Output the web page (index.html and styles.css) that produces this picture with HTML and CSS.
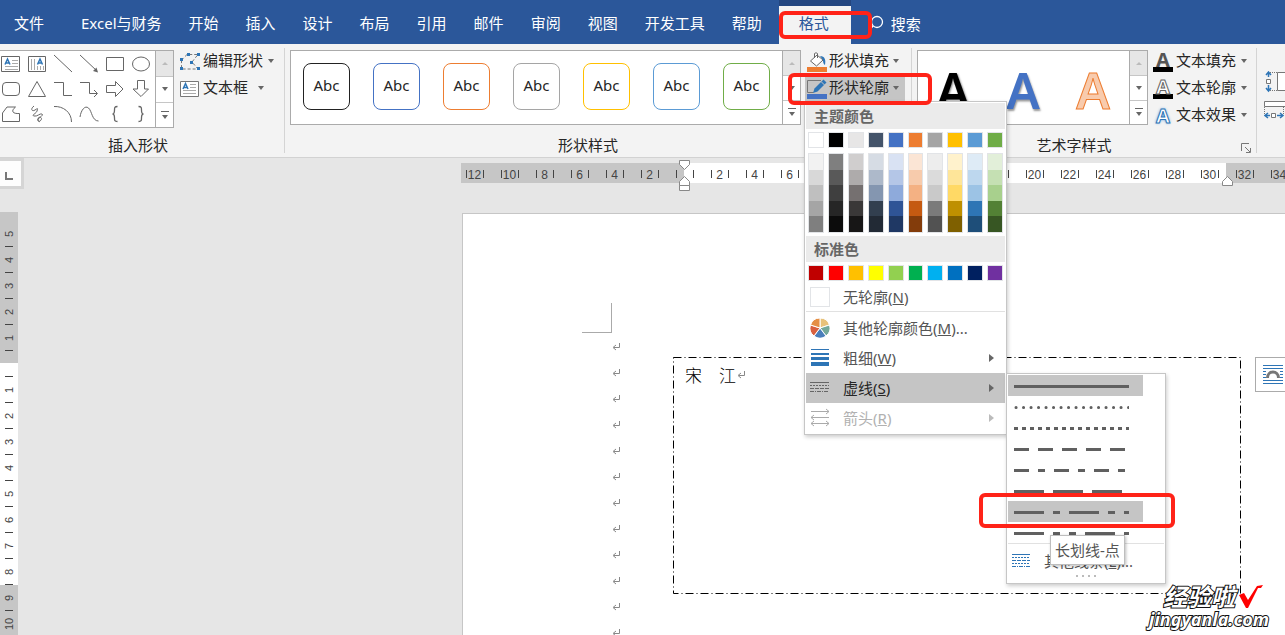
FILE: index.html
```html
<!DOCTYPE html>
<html lang="zh-CN">
<head>
<meta charset="utf-8">
<title>格式</title>
<link rel="stylesheet" href="styles.css">
</head>
<body>
<header class="tabs">
  <nav class="tab-list">
    <button class="tab tab-file">文件</button>
    <button class="tab">Excel与财务</button>
    <button class="tab">开始</button>
    <button class="tab">插入</button>
    <button class="tab">设计</button>
    <button class="tab">布局</button>
    <button class="tab">引用</button>
    <button class="tab">邮件</button>
    <button class="tab">审阅</button>
    <button class="tab">视图</button>
    <button class="tab">开发工具</button>
    <button class="tab">帮助</button>
    <div class="tab-active-wrap"><button class="tab tab-active">格式</button><span class="callout callout-tab"></span></div>
  </nav>
  <label class="search">
    <svg width="16" height="20" viewBox="0 0 16 20" fill="none" stroke="#fff" stroke-width="1.3"><circle cx="9" cy="8" r="5.5"/><path d="M5 12L0 18"/></svg>
    <input type="text" placeholder="搜索" aria-label="搜索">
  </label>
</header>

<section class="ribbon">
  <div class="group">
    <div class="group-body">
      <div class="gallery gallery-shapes">
        <div class="shape-grid">
          <button aria-label="文本框"><svg viewBox="0 0 20 20"><path d="M11 6.500h6M11 9.500h6M4 12.500h13M4 15.500h13" class="thin"/><path d="M.500 2.500h18v15h-18z"/><path class="blue" d="M4 10.500L6.500 5L9 10.500M5 9h3"/></svg></button>
          <button aria-label="竖排文本框"><svg viewBox="0 0 20 20"><path class="thin" d="M4.500 5v11M7.500 5v11M10.500 12v4M13.500 12v4M16.500 12v4"/><path d="M1.500 2.500h17v15h-17z"/><path class="blue" d="M10.500 10.500L13 5L15.500 10.500M11.500 9h3"/></svg></button>
          <button aria-label="直线"><svg viewBox="0 0 20 20"><path d="M1 1L19 18"/></svg></button>
          <button aria-label="箭头"><svg viewBox="0 0 20 20"><path d="M1 1L18 17"/><path class="solid" d="M19 18.500l-1.500-5l-3.500 3.500z"/></svg></button>
          <button aria-label="矩形"><svg viewBox="0 0 20 20"><path d="M1.500 3.500h17v13h-17z"/></svg></button>
          <button aria-label="椭圆"><svg viewBox="0 0 20 20"><ellipse cx="10" cy="10" rx="8.500" ry="7"/></svg></button>
          <button aria-label="圆角矩形"><svg viewBox="0 0 20 20"><rect x="1.500" y="3.500" width="17" height="13" rx="3.500"/></svg></button>
          <button aria-label="三角形"><svg viewBox="0 0 20 20"><path d="M1.500 17.500L10 2.500l8.500 15z"/></svg></button>
          <button aria-label="肘形"><svg viewBox="0 0 20 20"><path d="M1 3.500h9.500v13H19"/></svg></button>
          <button aria-label="肘形箭头"><svg viewBox="0 0 20 20"><path d="M1 3.500h9.500v11H18M15 11l3.500 3.500L15 18"/></svg></button>
          <button aria-label="右箭头"><svg viewBox="0 0 20 20"><path d="M1.500 6.500h9v-4l7.500 7.500l-7.500 7.500v-4h-9z"/></svg></button>
          <button aria-label="下箭头"><svg viewBox="0 0 20 20"><path d="M6.500 1.500h7v8.500h4l-7.500 7.500L2 10h4.500z"/></svg></button>
          <button aria-label="任意多边形"><svg viewBox="0 0 20 20"><path d="M1.500 9L6 3h8.500c-5 4-3 7 4 6.500v8h-17z"/></svg></button>
          <button aria-label="自由曲线"><svg viewBox="0 0 20 20"><path d="M7 2C3 5 5 8 8 6s3-2 2 1s-6 4-3 5s6-3 8-2s-3 4-4 5s1 4 3 1s-3-4-3-1s1 2 2 3"/></svg></button>
          <button aria-label="弧形"><svg viewBox="0 0 20 20"><path d="M1 2.500C10 2 18.500 8 18.500 18"/></svg></button>
          <button aria-label="曲线"><svg viewBox="0 0 20 20"><path d="M1 13C2 6 6 1 9.500 4C13 7 13 17 19.500 17"/></svg></button>
          <button aria-label="左大括号"><svg viewBox="0 0 20 20"><path stroke-width="1.300" d="M12.500 2.500c-3 0-3 1-3 3.500s0 4-2 4c2 0 2 1.500 2 4s0 3.500 3 3.500"/></svg></button>
          <button aria-label="右大括号"><svg viewBox="0 0 20 20"><path stroke-width="1.300" d="M7.500 2.500c3 0 3 1 3 3.500s0 4 2 4c-2 0-2 1.500-2 4s0 3.500-3 3.500"/></svg></button>
        </div>
        <div class="scroll"><button class="scroll-up" aria-label="上一行"></button><button class="scroll-down" aria-label="下一行"></button><button class="scroll-more" aria-label="更多"></button></div>
      </div>
      <div class="commands">
        <button class="command"><svg width="20" height="20" viewBox="0 0 20 20"><path d="M1.500 8L7 2.500h11L12 10l6 7H1.500z" fill="none" stroke="#777" stroke-dasharray="3 2"/><path fill="#2e75b6" d="M7 1h3v3H7zM17 1h3v3h-3zM0 6h3v3H0zM10 9h3v3h-3zM0 15h3v3H0zM17 15h3v3h-3z"/></svg>编辑形状<i class="caret"></i></button>
        <button class="command command-loose"><svg width="20" height="20" viewBox="0 0 20 20" fill="none" stroke="#777"><path d="M.500 2.500h18v15H.500z" fill="#fff"/><path stroke="#aaa" d="M10 5.500h6M10 8.500h6M3 11.500h13M3 14.500h13"/><path stroke="#2e75b6" stroke-width="1.500" d="M3 10L5.500 4.500L8 10M4 8.500h3"/></svg>文本框<i class="caret"></i></button>
      </div>
    </div>
    <h2 class="group-label label-shapes">插入形状</h2>
  </div>

  <div class="group">
    <div class="group-body group-inset">
      <div class="gallery">
        <div class="style-list">
          <button class="style-box s-black">Abc</button>
          <button class="style-box s-blue">Abc</button>
          <button class="style-box s-orange">Abc</button>
          <button class="style-box s-gray">Abc</button>
          <button class="style-box s-gold">Abc</button>
          <button class="style-box s-sky">Abc</button>
          <button class="style-box s-green">Abc</button>
        </div>
        <div class="scroll"><button class="scroll-up" aria-label="上一行"></button><button class="scroll-down" aria-label="下一行"></button><button class="scroll-more" aria-label="更多"></button></div>
      </div>
      <div class="commands commands-shape">
        <button class="command"><svg width="20" height="20" viewBox="0 0 20 20"><path fill="#ed7d31" d="M0 15h20v5H0z"/><path d="M3.500 9L10 3l6 5l-6.500 6zM7.500 6V1.500q1.500-1.500 3 0V6" fill="#fff" stroke="#666"/><path fill="#2e75b6" d="M13 4c5 0 6 4 5 9c-2-1-2-4-2-5z"/></svg>形状填充<i class="caret"></i></button>
        <div class="command-host">
          <button class="command command-open" aria-expanded="true"><svg width="20" height="20" viewBox="0 0 20 20"><path fill="#4472c4" d="M0 15h20v5H0z"/><path d="M14 1.500H.500v12h6" fill="none" stroke="#777"/><path fill="#2e75b6" d="M6 14l1.500-4.500l9-9l3 3l-9 9z"/><path stroke="#c5c5c5" d="M14 2.500l3.500 3.500"/></svg>形状轮廓<i class="caret"></i></button>
          <div class="menu">
            <h3 class="menu-title">主题颜色</h3>
            <div class="swatches" id="theme"></div>
            <div class="swatches swatches-shades" id="shades"></div>
            <h3 class="menu-title">标准色</h3>
            <div class="swatches" id="standard"></div>
            <button class="menu-item menu-none"><span class="empty-box"></span><span>无轮廓(<u>N</u>)</span></button>
            <button class="menu-item"><svg width="20" height="20" viewBox="0 0 20 20" stroke="#fff"><path fill="#e8c27a" d="M10 10V0A10 10 0 0 1 19.500 7z"/><path fill="#74a99a" d="M10 10l9.500-3A10 10 0 0 1 16 18z"/><path fill="#4a7ebb" d="M10 10l6 8A10 10 0 0 1 4 18z"/><path fill="#d9603f" d="M10 10l-6 8A10 10 0 0 1 .500 7z"/><path fill="#e58f45" d="M10 10L.500 7A10 10 0 0 1 10 0z"/></svg><span>其他轮廓颜色(<u>M</u>)...</span></button>
            <button class="menu-item"><svg width="20" height="20" viewBox="0 0 20 20" fill="#2e75b6"><path d="M1 1h18v1H1zM1 5h18v2H1zM1 9h18v3H1zM1 14h18v4H1z"/></svg><span>粗细(<u>W</u>)</span><i class="more"></i></button>
            <div class="command-host">
              <button class="menu-item menu-item-open"><svg width="20" height="20" viewBox="0 0 20 20" stroke="#666"><path d="M0 4.500h19"/><path stroke-dasharray="2 1" d="M0 7.500h19"/><path stroke-dasharray="4 1" d="M0 10.500h19"/><path stroke-dasharray="4 1 1 1" d="M0 13.500h19"/></svg><span>虚线(<u>S</u>)</span><i class="more"></i></button>
              <div class="submenu">
                <div id="dashes"></div>
                <button class="menu-item submenu-other"><svg width="18" height="16" viewBox="0 0 18 16" stroke="#2e75b6"><path d="M0 1.500h18"/><path stroke-dasharray="2 1" d="M0 4.500h18M0 10.500h18"/><path stroke-dasharray="4 1" d="M0 7.500h18"/><path stroke-dasharray="4 1 1 1" d="M0 13.500h18"/></svg><span>其他线条(<u>L</u>)...</span></button>
                <div class="grip"><i></i><i></i><i></i><i></i></div>
                <div class="tooltip" role="tooltip">长划线-点</div>
                <span class="callout callout-dash"></span>
              </div>
            </div>
            <button class="menu-item" disabled><svg width="20" height="20" viewBox="0 0 20 20" fill="none" stroke="#aaa"><path d="M1 3.500h18M16 1l3 2.500L16 6M1 9.500h18M4 7l-3 2.500L4 12M1 15.500h18M4 13l-3 2.500L4 18M16 13l3 2.500L16 18"/></svg><span>箭头(<u>R</u>)</span><i class="more"></i></button>
          </div>
          <span class="callout callout-outline"></span>
        </div>
      </div>
    </div>
    <h2 class="group-label label-wide">形状样式</h2>
  </div>

  <div class="group">
    <div class="group-body group-inset">
      <div class="gallery">
        <div class="art-list"><button class="art art-black">A</button><button class="art art-blue">A</button><button class="art art-orange">A</button></div>
        <div class="scroll"><button class="scroll-up" aria-label="上一行"></button><button class="scroll-down" aria-label="下一行"></button><button class="scroll-more" aria-label="更多"></button></div>
      </div>
      <div class="commands commands-text">
        <button class="command"><span class="letter letter-fill">A</span>文本填充<i class="caret"></i></button>
        <button class="command"><span class="letter letter-outline">A</span>文本轮廓<i class="caret"></i></button>
        <button class="command"><span class="letter letter-effect">A</span>文本效果<i class="caret"></i></button>
      </div>
    </div>
    <h2 class="group-label label-wide">艺术字样式</h2>
    <button class="launcher" aria-label="更多选项"><svg width="10" height="10" viewBox="0 0 10 10" fill="none" stroke="#777"><path d="M.500 8V.500H8M4 4l5 5M9.500 5v4.500H5"/></svg></button>
  </div>

  <div class="group group-size">
    <svg width="24" height="22" viewBox="0 0 24 22" fill="none" stroke="#777"><path stroke-dasharray="1 1" d="M6 1.500h8M6 19.500h8"/><path fill="#fff" d="M13.500 1.500h12v18h-12zM2.500 8.500h4v4h-4z"/><path stroke="#2e75b6" stroke-width="1.500" d="M4.500 6V1M2 4l2.500-3L7 4M4.500 14v6M2 17l2.500 3L7 17"/></svg>
    <svg width="24" height="20" viewBox="0 0 24 20" fill="none" stroke="#777"><path stroke-dasharray="1 1" d="M.500 6v8M19.500 6v8"/><path fill="#fff" d="M.500.500h22v5h-22zM7.500 12.500h4v4h-4z"/><path stroke="#2e75b6" stroke-width="1.500" d="M6 14.500H1M4 12l-3 2.500L4 17M13 14.500h6M16 12l3 2.500l-3 2.500"/></svg>
  </div>
</section>

<main class="workspace">
  <div class="ruler-row">
    <div class="corner"><button class="corner-box" aria-label="制表符"><svg width="8" height="8" viewBox="0 0 8 8"><path d="M1 0v7h7" fill="none" stroke="#777" stroke-width="2"/></svg></button></div>
    <div class="ruler">
      <div class="ruler-track" id="ruler"></div>
      <svg class="indent indent-left" width="12" height="33" viewBox="0 0 12 33" fill="#fff" stroke="#888"><path d="M.500 1.500h10v4l-5 5l-5-5zM5.500 17.500l5 5v4h-10v-4zM.500 26.500h10v5h-10z"/></svg>
      <svg class="indent indent-right" width="12" height="12" viewBox="0 0 12 12" fill="#fff" stroke="#888"><path d="M5.500 1.500l5 5v4h-10v-4z"/></svg>
    </div>
  </div>
  <div class="canvas">
    <div class="vruler" id="vruler"></div>
    <article class="page">
      <div class="crop"></div>
      <div class="marks" id="marks"></div>
      <div class="textbox">
        <svg class="textbox-line" width="100%" height="100%"><rect x="0.5" y="0.5" width="567" height="236" fill="none" stroke="#000" stroke-dasharray="8 3 1 3"/></svg>
        <p>宋　江<svg class="mark" width="8" height="8" viewBox="0 0 8 8"><path d="M7.500 0v4.500H2M4 2L1 4.500L4 7" fill="none" stroke="#888"/></svg></p>
      </div>
      <button class="layout-options" aria-label="布局选项"><svg width="22" height="22" viewBox="0 0 22 22" fill="none" stroke="#2e75b6"><path d="M1 1.500h20M1 4.500h20M1 7.500h3M18 7.500h3M1 10.500h3M18 10.500h3M1 13.500h3M18 13.500h3M1 16.500h20M1 19.500h20"/><path stroke="#777" stroke-width="3" d="M5.500 14c0-8 11-8 11 0"/></svg></button>
    </article>
  </div>
  <div class="watermark">
    <div class="watermark-top"><span>经验啦</span><svg width="24" height="24" viewBox="0 0 24 24"><path d="M0 10l5-2l4 7L18 1l6-1l-2 3h-3L9 23H7z" fill="#f00"/></svg></div>
    <div class="watermark-url">jingyanla.com</div>
  </div>
</main>
<script src="script.js"></script>
</body>
</html>
```

FILE: styles.css
```css
* { box-sizing: border-box; }
body {
  margin: 0;
  height: 100vh;
  overflow: hidden;
  display: flex;
  flex-direction: column;
  font: 15px/20px "Noto Sans", "Noto Sans CJK SC", sans-serif;
  color: #262626;
  background: #e6e6e6;
}
button, input { font: inherit; color: inherit; border: 0; padding: 0; margin: 0; background: none; }
button { white-space: nowrap; }
h2, h3, p { margin: 0; font: inherit; }
svg { flex: none; display: block; }

/* Tab strip */
.tabs { flex: none; display: flex; height: 44px; background: #2b579a; color: #fff; }
.tab-list { display: flex; gap: 27px; padding-left: 14px; }
.tab { height: 44px; padding-top: 2px; }
.tab-file { margin-right: 10px; }
.tab-active-wrap { position: relative; width: 72px; margin-left: -10px; border-top: 6px solid #234680; background: #f3f3f3; }
.tab-active { width: 100%; height: 38px; padding: 0 2px 4px 0; color: #2b579a; }
.search { display: flex; align-items: center; gap: 7px; padding: 4px 0 0 17px; }
.search input { width: 120px; height: 24px; outline: none; }
.search input::placeholder { color: #fff; opacity: 1; }

.callout { position: absolute; z-index: 9; border: 4px solid #ff2318; border-radius: 6px; pointer-events: none; }
.callout-tab { left: 0; top: 5px; width: 93px; height: 28px; }
.callout-outline { left: -17px; top: -3px; width: 144px; height: 32px; }
.callout-dash { left: -28px; top: 119px; width: 196px; height: 35px; }

/* Ribbon */
.ribbon { flex: none; position: relative; z-index: 2; display: flex; height: 114px; padding: 4px 0; background: #f3f3f3; border-bottom: 1px solid #d2d2d2; }
.group { flex: none; position: relative; display: flex; flex-direction: column; justify-content: space-between; padding-top: 1px; border-right: 1px solid #d4d4d4; }
.group-body { display: flex; }
.group-inset { padding-left: 5px; }
.group-label { line-height: 16px; text-align: center; }
.label-shapes { padding-right: 8px; }
.label-wide { padding-right: 20px; }
.gallery { display: flex; height: 75px; margin-top: 1px; background: #fff; border: 1px solid #ababab; }
.gallery-shapes { height: 78px; border-left: 0; }
.shape-grid { display: grid; grid-template-columns: repeat(6, 26px); grid-template-rows: repeat(3, 1fr); width: 155px; margin-left: -2px; margin-right: 2px; }
.shape-grid button { display: grid; place-items: center; }
.shape-grid svg { width: 20px; height: 20px; fill: none; stroke: #666; }
.shape-grid .thin { stroke: #aaa; }
.shape-grid .blue { stroke: #2e75b6; stroke-width: 1.5; }
.shape-grid .solid { fill: #666; stroke: none; }
.scroll { display: grid; grid-template-rows: 1fr 1fr 1fr; width: 18px; border-left: 1px solid #ababab; }
.scroll button { display: grid; place-content: center; justify-items: center; gap: 3px; }
.scroll button + button { border-top: 1px solid #c6c6c6; }
.scroll-up { background: #e6e6e6; }
.scroll-up::after { content: ""; border: 3px solid transparent; border-top: 0; border-bottom-color: #bbb; }
.scroll-down::after, .scroll-more::after, .caret { content: ""; border: 3px solid transparent; border-top: 4px solid #666; border-bottom: 0; }
.scroll-more::before { content: ""; width: 8px; height: 1px; background: #666; }

.commands { display: flex; flex-direction: column; gap: 2px; padding: 0 10px 0 6px; }
.commands-shape { padding: 0 6px 0 4px; }
.commands-text { padding: 0 9px 0 5px; }
.command { display: flex; align-items: center; gap: 3px; height: 25px; padding-bottom: 4px; }
.command svg { margin-top: 4px; }
.commands-shape .command { gap: 2px; width: 100px; padding-left: 2px; }
.caret { flex: none; margin: 2px 0 0 2px; }
.command-loose .caret { margin-left: 7px; }
.command-host { position: relative; }
.command-open { background: #c5c5c5; }
.letter { width: 20px; height: 20px; margin-top: 4px; font: 700 20px/16px "Noto Sans", sans-serif; }
.letter-fill { color: #555; border-bottom: 5px solid #000; }
.letter-outline { color: #fff; -webkit-text-stroke: 1px #666; border-bottom: 5px solid #000; }
.letter-effect { line-height: 20px; color: #fff; -webkit-text-stroke: 1px #2e75b6; text-shadow: 0 0 3px #4a90d9; }
.launcher { position: absolute; right: 5px; bottom: 0; }

.style-list { display: flex; gap: 23px; padding: 12px 12px 0 12px; }
.style-box { width: 47px; height: 47px; padding-bottom: 4px; border: 1px solid; border-radius: 8px; }
.s-black { border-color: #222; }
.s-blue { border-color: #4472c4; }
.s-orange { border-color: #ed7d31; }
.s-gray { border-color: #a5a5a5; }
.s-gold { border-color: #ffc000; }
.s-sky { border-color: #5b9bd5; }
.s-green { border-color: #70ad47; }

.art-list { display: flex; width: 211px; padding-top: 4px; }
.art { width: 70px; font: 600 50px/68px "Noto Sans", sans-serif; }
.art-black { color: #000; text-shadow: 1px 1px 2px #888; }
.art-blue { color: #4472c4; text-shadow: 1px 2px 2px #999; }
.art-orange { color: #f8cbad; -webkit-text-stroke: 1px #ed7d31; }
.group-size { gap: 8px; padding: 23px 0 0 7px; justify-content: flex-start; border: 0; }

/* Outline menu */
.menu, .submenu { position: absolute; z-index: 5; background: #fff; border: 1px solid #c6c6c6; box-shadow: 1px 2px 4px #0003; color: #555; }
.menu { left: -1px; top: 25px; width: 203px; padding: 1px; }
.menu-title { height: 26px; padding-left: 8px; line-height: 26px; font-weight: 700; color: #666; background: #ebebeb; }
.swatches { display: flex; gap: 4px; padding: 3px 2px; }
.swatches-shades { padding-top: 2px; }
.swatch { display: flex; flex-direction: column; width: 16px; height: 16px; border: 1px solid #e2e4e7; }
.swatches-shades .swatch { height: 80px; }
.swatch button { flex: 1; width: 100%; }
.menu-item { position: relative; display: flex; align-items: center; gap: 13px; width: 100%; height: 30px; padding-left: 4px; text-align: left; }
.menu-none { height: 28px; margin-bottom: 1px; padding-bottom: 1px; border-bottom: 1px solid #e1e1e1; }
.empty-box { width: 20px; height: 20px; border: 1px solid #e2e4e7; }
.menu-item:disabled { color: #b1b1b1; }
.menu-item-open { color: #262626; background: #c5c5c5; }
.more { margin-left: auto; margin-right: 11px; border: 4px solid transparent; border-left: 5px solid #666; border-right: 0; }
.menu-item:disabled .more { border-left-color: #bbb; }

.submenu { left: 200px; top: 0; width: 160px; padding: 1px; }
.dash { display: flex; align-items: center; width: 135px; height: 21px; padding-left: 6px; }
.dash-on { background: #c5c5c5; }
.submenu-other { gap: 14px; height: 32px; border-top: 1px solid #e1e1e1; padding-top: 2px; }
.grip { display: flex; justify-content: center; gap: 4px; height: 7px; }
.grip i { width: 2px; height: 2px; background: #bbb; }
.tooltip { position: absolute; left: 43px; top: 161px; padding: 4px; background: #fff; border: 1px solid #bebebe; box-shadow: 1px 1px 3px #0004; white-space: nowrap; }

/* Workspace */
.workspace { position: relative; flex: 1; display: flex; flex-direction: column; overflow: hidden; }
.ruler-row { flex: none; display: flex; justify-content: space-between; height: 54px; }
.corner { width: 24px; height: 31px; padding: 3px 3px 3px 0; background: #d5d5d5; margin-right: 437px; }
.corner-box { display: grid; place-items: center; width: 21px; height: 25px; padding: 5px 3px 0 0; background: #fdfdfd; }
.ruler { position: relative; flex: 1; height: 20px; margin-top: 5px; background: linear-gradient(90deg, #c6c6c6 223px, #fff 223px 765px, #c6c6c6 765px); font: 12px/20px "Liberation Sans", Arial, sans-serif; color: #444; }
.ruler-track { display: flex; height: 20px; margin-left: -4px; width: 828px; padding-top: 1px; overflow: hidden; }
.ruler-cell { flex: none; display: flex; align-items: center; justify-content: center; width: 35px; height: 20px; }
.ruler-cell span { width: 18px; height: 8px; line-height: 10px; text-align: center; border: solid #444; border-width: 0 1px; }
.indent { position: absolute; }
.indent-left { left: 218px; top: -4px; }
.indent-right { left: 761px; top: 12px; }
.canvas { flex: 1; display: flex; min-height: 0; }
.vruler { flex: none; width: 18px; padding-top: 9px; overflow: hidden; background: linear-gradient(#c6c6c6 151px, #fff 151px 373px, #c6c6c6 373px); font: 11px/18px "Liberation Sans", Arial, sans-serif; color: #444; }
.vruler-cell { display: flex; flex-direction: column; align-items: center; height: 26px; }
.vruler-cell span { flex: 1; writing-mode: vertical-rl; transform: rotate(180deg); text-align: center; }
.vruler-cell::after { content: ""; width: 8px; height: 1px; background: #444; }
.page { position: relative; flex: 1; margin: 1px 0 0 444px; padding: 89px 0 0 119px; background: #fff; border: solid #c6c6c6; border-width: 1px 0 0 1px; }
.crop { width: 30px; height: 30px; border: solid #aaa; border-width: 0 1px 1px 0; }
.marks { display: flex; flex-direction: column; gap: 18px; padding: 10px 0 0 30px; }
.textbox { position: absolute; left: 210px; top: 143px; width: 568px; height: 237px; padding: 8px 12px; color: #000; font: 300 17px/20px "Noto Sans CJK SC", sans-serif; }
.textbox-line { position: absolute; left: 0; top: 0; }
.textbox p { display: flex; align-items: center; gap: 1px; }
.layout-options { position: absolute; left: 792px; top: 143px; display: grid; place-items: center; width: 35px; height: 35px; background: #fff; border: 1px solid #ababab; }

.watermark { position: absolute; right: 16px; bottom: 6px; z-index: 3; color: #fff; font-weight: 700; font-style: italic; -webkit-text-stroke: 2px #111; paint-order: stroke fill; text-align: right; }
.watermark-top { display: flex; justify-content: flex-end; align-items: center; gap: 4px; margin-right: 6px; font-size: 24px; line-height: 24px; }
.watermark-url { font-size: 18px; line-height: 20px; }
```

FILE: script.js
```js
const theme = ['#ffffff', '#000000', '#e7e6e6', '#44546a', '#4472c4', '#ed7d31', '#a5a5a5', '#ffc000', '#5b9bd5', '#70ad47'];
const shades = [
  ['#f2f2f2', '#d8d8d8', '#bfbfbf', '#a5a5a5', '#7f7f7f'],
  ['#7f7f7f', '#595959', '#3f3f3f', '#262626', '#0c0c0c'],
  ['#d0cece', '#aeabab', '#757070', '#3a3838', '#171616'],
  ['#d6dce4', '#adb9ca', '#8496b0', '#323f4f', '#222a35'],
  ['#d9e2f3', '#b4c6e7', '#8eaadb', '#2f5496', '#1f3864'],
  ['#fbe5d5', '#f7cbac', '#f4b183', '#c55a11', '#833c0b'],
  ['#ededed', '#dbdbdb', '#c9c9c9', '#7b7b7b', '#525252'],
  ['#fff2cc', '#fee599', '#ffd965', '#bf9000', '#7f6000'],
  ['#deebf6', '#bdd7ee', '#9cc3e5', '#2e75b5', '#1e4e79'],
  ['#e2efd9', '#c5e0b3', '#a8d08d', '#538135', '#375623']
];
const standard = ['#c00000', '#ff0000', '#ffc000', '#ffff00', '#92d050', '#00b050', '#00b0f0', '#0070c0', '#002060', '#7030a0'];
const dashes = ['', '3 4.500', '4 4', '15 9', '15 9 7 9', '30 9', '30 9 7 9', '30 9 7 9 7 9'];

const fill = (id, html) => { document.getElementById(id).innerHTML = html; };
const swatch = colors => '<div class="swatch">' + colors.map(c => `<button style="background:${c}" aria-label="${c}"></button>`).join('') + '</div>';

fill('theme', theme.map(c => swatch([c])).join(''));
fill('shades', shades.map(swatch).join(''));
fill('standard', standard.map(c => swatch([c])).join(''));

fill('dashes', dashes.map((d, i) => {
  const dots = i === 1;
  return `<button class="dash${i === 0 || i === 6 ? ' dash-on' : ''}" aria-label="线型 ${i + 1}">
    <svg width="115" height="4" viewBox="0 0 115 4"><path d="M${dots ? 2 : 0} 2.500H115" stroke="#606060" stroke-width="3"
    ${dots ? 'stroke-linecap="round" stroke-dasharray="0.1 7.400"' : `stroke-dasharray="${d}"`}/></svg></button>`;
}).join(''));

let cells = '';
for (let n = -12; n <= 34; n += 2) cells += `<div class="ruler-cell"><span>${n ? Math.abs(n) : ''}</span></div>`;
fill('ruler', cells);

cells = '';
for (let n = -5; n <= 10; n++) cells += `<div class="vruler-cell"><span>${n ? Math.abs(n) : ''}</span></div>`;
fill('vruler', cells);

fill('marks', '<svg class="mark" width="8" height="8" viewBox="0 0 8 8"><path d="M7.500 0v4.500H2M4 2L1 4.500L4 7" fill="none" stroke="#888"/></svg>'.repeat(12));
```
